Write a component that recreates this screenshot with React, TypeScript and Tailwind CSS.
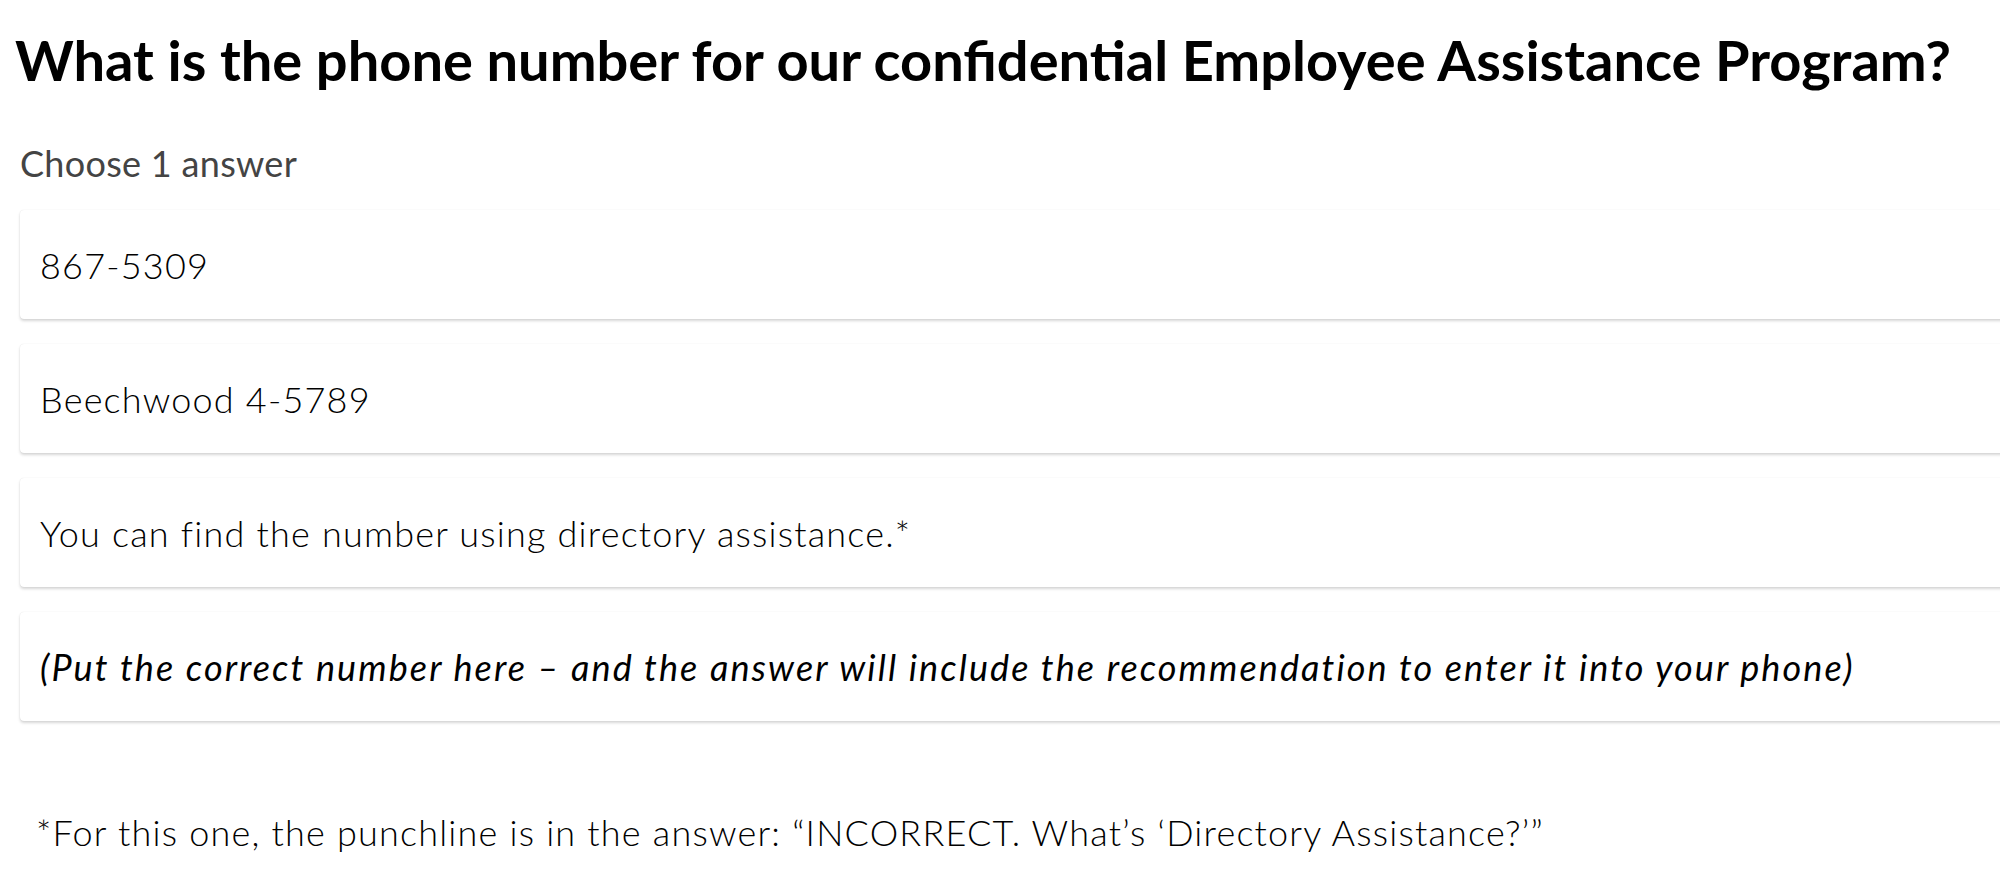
import React from "react";

const ANSWERS = [
  { text: "867-5309", italic: false },
  { text: "Beechwood 4-5789", italic: false },
  { text: "You can find the number using directory assistance.*", italic: false },
  {
    text: "(Put the correct number here – and the answer will include the recommendation to enter it into your phone)",
    italic: true,
  },
];

function AnswerCard({ text, italic }: { text: string; italic: boolean }) {
  return (
    <div className="flex h-[109px] w-[2040px] items-center rounded-[4px] bg-white pl-[20px] shadow-[0_2px_3px_rgba(0,0,0,0.16),0_0_1px_rgba(0,0,0,0.12)]">
      <span
        className={
          italic
            ? "text-[36px] italic leading-[36px] tracking-[2.1px] text-black"
            : "text-[36px] font-light leading-[36px] tracking-[1.2px] text-black"
        }
      >
        {text}
      </span>
    </div>
  );
}

export default function App() {
  return (
    <div className="h-[869px] w-full overflow-hidden bg-white font-['Lato','Liberation_Sans',sans-serif]">
      <h1 className="pl-[15px] pt-[32px] text-[56px] font-bold leading-[56px] text-black">
        What is the phone number for our confidential Employee Assistance Program?
      </h1>

      <div className="pl-[20px]">
        <p className="mt-[57px] text-[36px] leading-[36px] tracking-[0.3px] text-[#444]">Choose 1 answer</p>

        <div className="mt-[29px] flex flex-col gap-[25px]">
          {ANSWERS.map((a) => (
            <AnswerCard key={a.text} text={a.text} italic={a.italic} />
          ))}
        </div>

        <p className="ml-[16px] mt-[93px] text-[36px] font-light leading-[36px] tracking-[1.2px] text-black">
          *For this one, the punchline is in the answer: “INCORRECT. What’s ‘Directory Assistance?’”
        </p>
      </div>
    </div>
  );
}
